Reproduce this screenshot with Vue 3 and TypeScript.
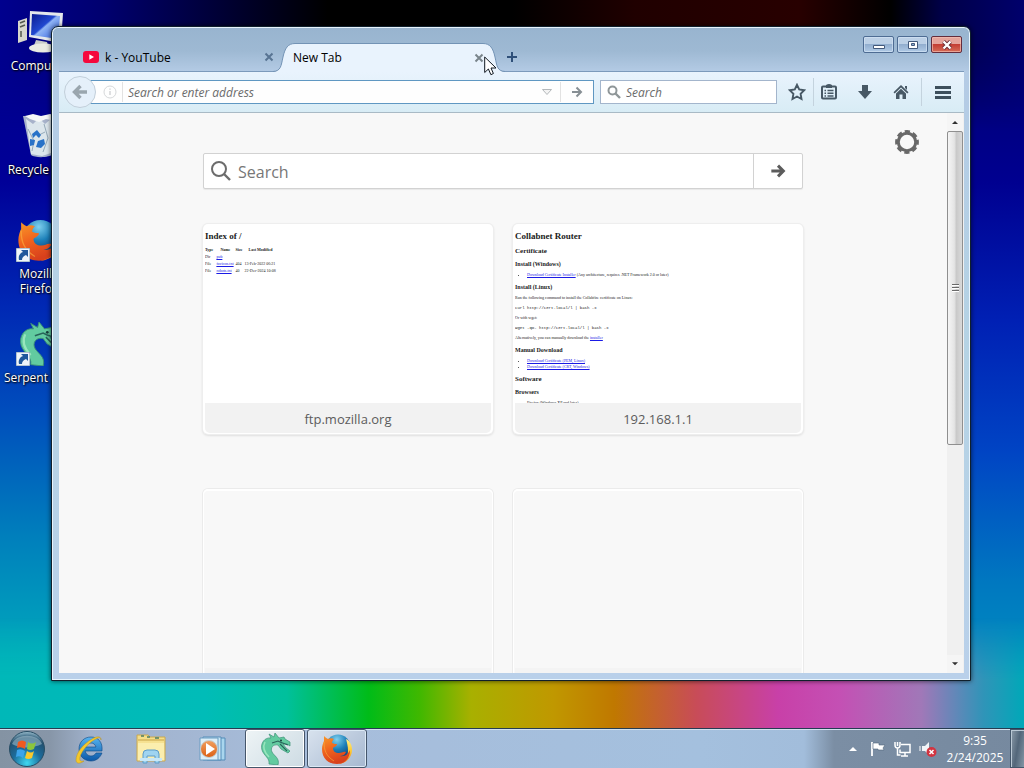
<script setup lang="ts">
import { ref } from 'vue'

interface Tile { title: string; kind: 'index' | 'router' | 'empty' }

const address = ref('')
const query = ref('')
const pageQuery = ref('')

const shortcuts = [
  { icon: 'pc', label: 'Computer', link: false },
  { icon: 'bin', label: 'Recycle Bin', link: false },
  { icon: 'firefox', label: 'Mozilla Firefox', link: true },
  { icon: 'serpent', label: 'Serpent I…', link: true },
]
const tiles: Tile[] = [
  { title: 'ftp.mozilla.org', kind: 'index' },
  { title: '192.168.1.1', kind: 'router' },
  { title: '', kind: 'empty' },
  { title: '', kind: 'empty' },
]
const pinned = [
  { icon: 'ie', label: 'Internet Explorer', state: '' },
  { icon: 'folder', label: 'Windows Explorer', state: '' },
  { icon: 'media', label: 'Media Player', state: '' },
  { icon: 'serpent', label: 'Serpent', state: 'active' },
  { icon: 'firefox', label: 'Firefox', state: 'open' },
]
</script>

<template>
  <svg class="defs" aria-hidden="true">
    <defs>
      <radialGradient id="globe" cx=".45" cy=".2" r=".8"><stop offset="0" stop-color="#7fd0ee" /><stop offset=".5" stop-color="#1c7fb8" /><stop offset="1" stop-color="#123a70" /></radialGradient>
      <linearGradient id="fur" x1="0" y1="0" x2=".4" y2="1"><stop offset="0" stop-color="#f89a2a" /><stop offset=".5" stop-color="#f0641e" /><stop offset="1" stop-color="#d8401c" /></linearGradient>
      <linearGradient id="tail" x1="0" y1="0" x2="0" y2="1"><stop offset="0" stop-color="#fff08a" /><stop offset=".5" stop-color="#fcc832" /><stop offset="1" stop-color="#f07820" /></linearGradient>
      <linearGradient id="screen" x1="0" y1="0" x2="1" y2="1"><stop offset="0" stop-color="#0a1a90" /><stop offset=".45" stop-color="#2148d0" /><stop offset=".5" stop-color="#8fb4f4" /><stop offset="1" stop-color="#2a58e0" /></linearGradient>
      <radialGradient id="orb" cx=".5" cy=".9" r=".9"><stop offset="0" stop-color="#3fd8f0" /><stop offset=".45" stop-color="#1c6c9c" /><stop offset=".8" stop-color="#23506e" /><stop offset="1" stop-color="#9cc0d0" /></radialGradient>
      <linearGradient id="manila" x1="0" y1="0" x2="0" y2="1"><stop offset="0" stop-color="#f4dc84" /><stop offset="1" stop-color="#fbf0b4" /></linearGradient>
      <linearGradient id="play" x1="0" y1="0" x2="0" y2="1"><stop offset="0" stop-color="#f0a060" /><stop offset="1" stop-color="#dc6014" /></linearGradient>
      <linearGradient id="ieblue" x1="0" y1="0" x2="0" y2="1"><stop offset="0" stop-color="#56b4f0" /><stop offset="1" stop-color="#0c58a8" /></linearGradient>
    </defs>
    <symbol id="firefox" viewBox="0 0 32 32">
      <circle cx="17" cy="14" r="12.5" fill="url(#globe)" />
      <path d="M25 6c4 2 6 6 6 11 0 8-7 14-14 14 6-2 10-7 10-13 0-5-1-8-2-12z" fill="url(#tail)" />
      <path d="M3 3c1 1 2 2 4 3 2-1 4-1 6 0-1 1-2 2-2 4 2 1 3 1 5 1 0 2-3 3-4 4 0 3 2 5 6 5 3 0 4-2 7-1-1 3-4 4-6 4 5 1 8-2 10-6 0 8-5 14-13 14C7 31 1 25 1 16c0-3 1-6 2-8z" fill="url(#fur)" />
      <path d="M3 9c0 8 2 14 10 19" fill="none" stroke="#fbb040" stroke-width="1" opacity=".6" />
    </symbol>
    <symbol id="serpent" viewBox="0 0 32 32">
      <path d="M10 31c1-6-5-8-7-14C1 10 6 4 12 5l-2-4 5 3 1-4 4 5 5-1 1 2 5 3 0 4-3-2-4 0 3 4 4 3-2 2-7-4-3-4c-5-1-8 3-6 7 2 4 8 6 6 13z" fill="#62cba0" stroke="#3d9277" stroke-width=".7" />
      <path d="M13 10l6-2 4 2m-2 1 7 7m-7-9 8 3" fill="none" stroke="#28645a" stroke-width="1.1" />
      <path d="M6 9c-3 6 0 11 4 15" fill="none" stroke="#98e6bd" stroke-width="1.5" />
      <circle cx="22" cy="7.5" r="1" fill="#173f3c" />
    </symbol>
    <symbol id="pc" viewBox="0 0 48 48">
      <path d="M3 13l9-3v22l-9 3z" fill="#d8d8cc" /><path d="M5 15l5-2m-5 6 5-2m-4 6v6" stroke="#54594e" stroke-width="1.5" />
      <path d="M21 32l11 2 2 6H18z" fill="#c8ccc8" /><ellipse cx="28" cy="40" rx="14" ry="4.5" fill="#e9ebe2" />
      <path d="M15 3l33 2-2 30-32-6z" fill="#e4e8ec" /><path d="M17 6l28 2-2 23-27-4z" fill="url(#screen)" />
    </symbol>
    <symbol id="bin" viewBox="0 0 48 48">
      <path d="M8 4l36 0-6 38c-4 4-18 4-22 1z" fill="#b9c5d0" opacity=".9" />
      <path d="M11 7l7 5 6-6 6 6 7-6 4 6-5 29-9 3-11-2z" fill="#dce6ec" />
      <path d="M10 4l8-2 8 2 9-2 10 3-4 4-10-2-7 3-9-3z" fill="#f6f8f8" />
      <path d="M13 17l6 12-2 10m12-27 4 14-5 14m-6-16 8-4" stroke="#94a9b8" fill="none" />
      <path d="M17 22l5-4 4 5-2 3-3-3-3 3zM15 27l5 1-1 5-4 1zM23 29l6-2 1 5-4 4-5-1z" fill="#2872c8" />
    </symbol>
    <symbol id="arrow-link" viewBox="0 0 14 14">
      <path d="M0 0h14v14H0z" fill="#eef4fa" stroke="#7790a8" /><path d="M5 2h7v7l-2-2c-3 1-4 3-4 5H3c-1-4 1-7 4-8z" fill="#20589c" />
    </symbol>
    <symbol id="ie" viewBox="0 0 32 32">
      <path d="M29 18H12c1 3 3 5 6 5 2 0 4-1 5-3h6c-2 5-6 8-11 8C11 28 6 23 6 16S11 4 18 4s12 5 11 14zm-17-4h11c-1-3-3-4-5-4s-5 1-6 4z" fill="url(#ieblue)" stroke="#0b4684" stroke-width=".6" />
      <path d="M28 7c0-4-4-4-9-1C10 11 3 20 3 27c0 4 4 4 8 1-3 1-5 0-4-4C9 17 17 8 25 5c2-1 3 0 3 2z" fill="#f4c82c" stroke="#bd9420" stroke-width=".5" />
    </symbol>
    <symbol id="folder" viewBox="0 0 32 32">
      <path d="M2 2h11l2 2h15v24H2z" fill="url(#manila)" stroke="#c9a850" /><path d="M3 7h26" stroke="#c7a346" /><path d="M6 3h3m3 1h3m5 1h4" stroke="#4e7f64" stroke-width="1.5" />
      <path d="M3 10h26v17H3z" fill="#fbeeae" /><path d="M8 30v-9q0-4 4-4h8q4 0 4 4v9h-4v-7h-8v7z" fill="#9fd4f0" stroke="#5c9cc8" /><path d="M5 25h22v3H5z" fill="#c8e7f6" />
    </symbol>
    <symbol id="media" viewBox="0 0 32 32">
      <path d="M10 5h18v22H10z" fill="#a9d6ee" stroke="#548cb8" /><path d="M6 4h18v23H6z" fill="#c9e6f5" stroke="#548cb8" /><path d="M3 5h18v22H3z" fill="#dbeef8" stroke="#6a9cc2" />
      <circle cx="12" cy="16" r="8.5" fill="url(#play)" stroke="#c5d0d4" /><path d="M9 10v12l9-6z" fill="#fff" />
    </symbol>
  </svg>

  <div class="screen">
    <main class="desktop">
      <ul class="shortcuts">
        <li v-for="s in shortcuts" :key="s.label">
          <span class="shortcut-icon">
            <svg class="art" :class="s.icon"><use :href="'#' + s.icon" /></svg>
            <svg v-if="s.link" class="link-badge"><use href="#arrow-link" /></svg>
          </span>
          <span class="shortcut-label">{{ s.label }}</span>
        </li>
      </ul>

      <section class="window" aria-label="Browser">
        <header class="titlebar">
          <div class="tabs" role="tablist">
            <div class="tab" role="tab" aria-selected="false">
              <svg class="yt" viewBox="0 0 16 12"><rect width="16" height="12" rx="3" fill="#f5083c" /><path d="M6.3 3.2v5.6L11 6z" fill="#fff" /></svg>
              <span class="tab-title">k - YouTube</span>
              <button class="close-tab" aria-label="Close tab"><svg viewBox="0 0 10 10"><path d="M1.5 1.5l7 7m0-7-7 7" stroke="#587493" stroke-width="2" /></svg></button>
            </div>
            <div class="tab selected" role="tab" aria-selected="true">
              <svg class="edge" viewBox="0 0 28 29"><path d="M0 29C8 28 8 23 10 14 12 5 15 .5 22 .5h6V29z" fill="#e9f3fd" /><path d="M0 28.500C8 28 8 23 10 14 12 5 15 .5 22 .5h6" fill="none" stroke="#7393b5" /></svg>
              <div class="tab-body">
                <span class="tab-title">New Tab</span>
                <button class="close-tab" aria-label="Close tab"><svg viewBox="0 0 10 10"><path d="M1.5 1.5l7 7m0-7-7 7" stroke="#7a858c" stroke-width="2" /></svg></button>
              </div>
              <svg class="edge" viewBox="0 0 28 29"><path d="M28 29C20 28 20 23 18 14 16 5 13 .5 6 .5H0V29z" fill="#e9f3fd" /><path d="M28 28.500C20 28 20 23 18 14 16 5 13 .5 6 .5H0" fill="none" stroke="#7393b5" /></svg>
            </div>
            <button class="new-tab" aria-label="New tab"><svg viewBox="0 0 12 12"><path d="M6 1v10M1 6h10" stroke="#2f5079" stroke-width="2" /></svg></button>
          </div>
          <div class="controls">
            <button aria-label="Minimize"><svg viewBox="0 0 14 12"><path d="M1.500 6.500h11v3h-11z" fill="#fff" stroke="#43597b" /></svg></button>
            <button aria-label="Maximize"><svg viewBox="0 0 14 12"><path d="M2.500 2.500h9v7h-9z" fill="#fff" stroke="#43597b" /><path d="M5.500 4.500h3v2h-3z" fill="#8daccf" stroke="#43597b" /></svg></button>
            <button class="close" aria-label="Close"><svg viewBox="0 0 14 12"><path d="M3.500 2.500l7 7m0-7-7 7" stroke="#672c35" stroke-width="4" /><path d="M3.500 2.500l7 7m0-7-7 7" stroke="#fff" stroke-width="2.400" /></svg></button>
          </div>
        </header>

        <div class="browser">
          <nav class="toolbar">
            <button class="back" aria-label="Back"><svg viewBox="0 0 16 16"><path d="M8.500 2 2.500 8l6 6M3 8h12" fill="none" stroke="#9aa6ae" stroke-width="3.400" /></svg></button>
            <form class="urlbar" @submit.prevent>
              <svg class="info" viewBox="0 0 14 14"><circle cx="7" cy="7" r="6" fill="none" stroke="#d6d8da" /><path d="M7 6v4M7 3.500v1.300" stroke="#d0d2d4" stroke-width="1.400" /></svg>
              <input v-model="address" type="text" aria-label="Address" placeholder="Search or enter address">
              <button type="button" class="drop" aria-label="History"><svg viewBox="0 0 12 8"><path d="M1.500 1.500h9L6 6.500z" fill="#f4f4f4" stroke="#b4b8bb" /></svg></button>
              <button class="go" aria-label="Go"><svg viewBox="0 0 12 12"><path d="M1 6h9M5.500 1.500 10 6l-4.500 4.500" fill="none" stroke="#878f94" stroke-width="2" /></svg></button>
            </form>
            <form class="searchbar" @submit.prevent>
              <svg viewBox="0 0 14 14"><circle cx="5.500" cy="5.500" r="4" fill="none" stroke="#8f9698" stroke-width="2" /><path d="M8.500 8.500l4.500 4.500" stroke="#8f9698" stroke-width="2.400" /></svg>
              <input v-model="query" type="text" aria-label="Web search" placeholder="Search">
            </form>
            <div class="tools">
              <button class="star" aria-label="Bookmark"><svg viewBox="0 0 18 18"><path d="M9 1.800l2.200 4.700 5 .7-3.600 3.600.9 5.200L9 13.500 4.500 16l.9-5.200L1.800 7.200l5-.7z" fill="none" stroke="#475865" stroke-width="1.900" /></svg></button>
              <button aria-label="Bookmarks list"><svg viewBox="0 0 18 18"><path d="M3 3.500h12q1 0 1 1v10q0 1-1 1H3q-1 0-1-1v-10q0-1 1-1z" fill="none" stroke="#475865" stroke-width="2" /><path d="M6 2q3-2 6 0v3H6z" fill="#475865" /><path d="M4.500 7.500h1.500m1.500 0h6m-9 2.800h1.500m1.500 0h6m-9 2.700h1.500m1.500 0h6" stroke="#475865" stroke-width="1.500" /></svg></button>
              <button aria-label="Downloads"><svg viewBox="0 0 18 18"><path d="M6 2h6v6h4l-7 8-7-8h4z" fill="#475865" /></svg></button>
              <button aria-label="Home"><svg viewBox="0 0 18 18"><path d="M9 2l7.500 7.300-1.200 1.200L9 4.500l-6.300 6L1.500 9.300zM13 3h2v4l-2-2zM4 10.500 9 5.800l5 4.700V16h-3.500v-4.500h-3V16H4z" fill="#475865" /></svg></button>
              <button class="menu" aria-label="Menu"><svg viewBox="0 0 18 18"><path d="M1 4.500h16M1 9.500h16M1 14.500h16" stroke="#3d4f5c" stroke-width="2.800" /></svg></button>
            </div>
          </nav>

          <div class="viewport">
            <div class="page">
              <button class="gear" aria-label="Customize"><svg viewBox="0 0 26 26"><circle cx="13" cy="13" r="8.700" fill="none" stroke="#686868" stroke-width="3" /><circle cx="13" cy="13" r="10.500" fill="none" stroke="#686868" stroke-width="2.800" stroke-dasharray="5.200 3.047" stroke-dashoffset="2.600" /></svg></button>
              <form class="page-search" @submit.prevent>
                <svg viewBox="0 0 22 22"><circle cx="9" cy="9" r="7" fill="none" stroke="#6c6c6c" stroke-width="2" /><path d="M14 14l6 6" stroke="#6c6c6c" stroke-width="2.400" /></svg>
                <input v-model="pageQuery" type="text" aria-label="Search the web" placeholder="Search">
                <button aria-label="Submit search"><svg viewBox="0 0 18 16"><path d="M1.500 8H15M9 2l6 6-6 6" fill="none" stroke="#5c5c5c" stroke-width="3.400" /></svg></button>
              </form>
              <div class="tiles">
                <article v-for="(t, i) in tiles" :key="i" class="tile" :class="t.kind">
                  <div class="thumb">
                    <template v-if="t.kind === 'index'">
                      <h1>Index of /</h1>
                      <table>
                        <thead><tr><th>Type</th><th class="name">Name</th><th>Size</th><th class="modified">Last Modified</th></tr></thead>
                        <tbody>
                          <tr><td>Dir</td><td><a href="#">pub</a></td><td></td><td></td></tr>
                          <tr><td>File</td><td><a href="#">favicon.txt</a></td><td>404</td><td>13-Feb-2022 06:21</td></tr>
                          <tr><td>File</td><td><a href="#">robots.txt</a></td><td>40</td><td>22-Dec-2024 10:08</td></tr>
                        </tbody>
                      </table>
                    </template>
                    <template v-else-if="t.kind === 'router'">
                      <h1>Collabnet Router</h1>
                      <h2>Certificate</h2>
                      <h3>Install (Windows)</h3>
                      <ul><li><a href="#">Download Certificate Installer</a> (Any architecture, requires .NET Framework 2.0 or later)</li></ul>
                      <h3>Install (Linux)</h3>
                      <p>Run the following command to install the Collabfire certificate on Linux:</p>
                      <pre>curl http://cert.local/l | bash -x</pre>
                      <p>Or with wget:</p>
                      <pre>wget -qO- http://cert.local/l | bash -x</pre>
                      <p>Alternatively, you can manually download the <a href="#">installer</a></p>
                      <h3>Manual Download</h3>
                      <ul>
                        <li><a href="#">Download Certificate (PEM, Linux)</a></li>
                        <li><a href="#">Download Certificate (CRT, Windows)</a></li>
                      </ul>
                      <h2>Software</h2>
                      <h3>Browsers</h3>
                      <ul><li>Firefox (Windows XP and later)</li></ul>
                    </template>
                  </div>
                  <div class="caption">{{ t.title }}</div>
                </article>
              </div>
            </div>
            <div class="scrollbar">
              <button aria-label="Scroll up"><svg viewBox="0 0 8 5"><path d="M0 5l4-4 4 4z" fill="#303030" /></svg></button>
              <div class="track"><div class="thumb-bar"><i></i><i></i><i></i></div></div>
              <button aria-label="Scroll down"><svg viewBox="0 0 8 5"><path d="M0 0l4 4 4-4z" fill="#303030" /></svg></button>
            </div>
          </div>
        </div>
      </section>
    </main>

    <footer class="taskbar">
      <button class="start" aria-label="Start">
        <svg viewBox="0 0 38 38">
          <circle cx="19" cy="19" r="17.500" fill="url(#orb)" stroke="#274d64" />
          <path d="M4 14C8 3 30 3 34 14 26 18 12 19 4 14z" fill="#d8edf6" opacity=".4" />
          <path d="M10 12q4-3 8 0l-1 7q-4-3-8-1z" fill="#ef5a20" /><path d="M20 12q4 3 8 0l-2 7q-4 2-7 0z" fill="#8cc63c" />
          <path d="M9 20q4-2 8 1l-2 7q-3-3-7-1z" fill="#3ca4ec" /><path d="M19 21q4 3 7 0l-2 7q-4 2-7 0z" fill="#fbc92c" />
        </svg>
      </button>
      <div class="apps">
        <button v-for="p in pinned" :key="p.label" :class="p.state" :aria-label="p.label"><svg><use :href="'#' + p.icon" /></svg></button>
      </div>
      <div class="tray">
        <button aria-label="Show hidden icons"><svg class="up" viewBox="0 0 8 5"><path d="M0 5l4-4 4 4z" fill="#fff" /></svg></button>
        <button aria-label="Action Center"><svg viewBox="0 0 18 18"><path d="M3 2v14" stroke="#fff" stroke-width="1.800" /><path d="M4 3h6v2h6l-2 3 1 2H9V9H4z" fill="#fff" stroke="#53677c" stroke-width=".6" /></svg></button>
        <button aria-label="Network"><svg viewBox="0 0 18 18"><path d="M7 4.500h9v8H6v-3M11 13v3M7 16h7M3.500 8v7h3M1 2v3q0 3 2.500 3T6 5V2M3.500 2v4" fill="none" stroke="#fff" stroke-width="1.500" /></svg></button>
        <button aria-label="Volume"><svg viewBox="0 0 18 18"><path d="M3 6h3l4-4v13l-4-4H3z" fill="#f0f4f8" /><path d="M1 6v5" stroke="#fff" /><circle cx="12.500" cy="12" r="5" fill="#d23440" /><path d="M10.500 10l4 4m0-4-4 4" stroke="#fff" stroke-width="1.500" /></svg></button>
      </div>
      <div class="clock"><time>9:35</time><time>2/24/2025</time></div>
      <button class="show-desktop" aria-label="Show desktop"></button>
    </footer>

    <svg class="cursor" viewBox="0 0 13 20" aria-hidden="true"><path d="M.7 1v15.500l3.700-3.500 2.500 5.700 2.500-1.200L7 12h5z" fill="#fff" stroke="#101820" /></svg>
  </div>
</template>

<style>
html, body { margin: 0; height: 100%; overflow: hidden; }
</style>

<style scoped>
* { box-sizing: border-box; }
button { border: 0; background: none; padding: 0; margin: 0; display: flex; align-items: center; justify-content: center; font: inherit; color: inherit; }
input { border: 0; background: none; outline: 0; padding: 0; min-width: 0; flex: 1; font: inherit; color: #222; }
ul { list-style: none; margin: 0; padding: 0; }
svg { display: block; flex: none; }
.defs { position: absolute; width: 0; height: 0; }

.screen { position: relative; height: 100vh; display: flex; flex-direction: column; overflow: hidden; font: 12px/15px "Open Sans", "Noto Sans", sans-serif; color: #000; }
.desktop {
  position: relative; flex: 1; min-height: 0; isolation: isolate;
  background:
    linear-gradient(180deg, #000068 0, #000090 25%, #0020b4 44%, #0044c4 62%, #0078c0 80%, #009cc0 100%) right / 54px 100% no-repeat,
    linear-gradient(180deg, #000088 0, #000098 25%, #0028b4 42%, #004cbc 56%, #0080bc 74%, #00a8bc 90%, #00b8b8 100%);
}
.desktop::before, .desktop::after { content: ""; position: absolute; left: 0; right: 0; z-index: -1; }
.desktop::before { top: 0; height: 130px; background: linear-gradient(90deg, #00008e 0, #000070 10%, #000028 24%, #000 32%, #000 50%, #200000 62%, #280000 78%, #000 87%, #000048 92%, #00006c 100%); mask-image: linear-gradient(#000 35%, transparent); }
.desktop::after { bottom: 0; height: 110px; background: linear-gradient(90deg, #00b8b8 0, #00bcb8 20%, #00c09c 28%, #00bc18 36%, #40b800 41%, #a8b000 46%, #c09800 54%, #c07800 60%, #c84c58 68%, #c840a8 76%, #c450b4 82%, #a078b8 90%, #3094b8 96%, #00a8b8 100%); mask-image: linear-gradient(transparent, #000 56%); }

.shortcuts { width: 78px; padding-top: 8px; display: grid; grid-auto-rows: 104px; color: #fff; text-align: center; text-shadow: 1px 1px 2px #000, 0 0 2px #000; }
.shortcuts li { display: flex; flex-direction: column; align-items: center; gap: 2px; }
.shortcut-icon { position: relative; width: 48px; height: 48px; display: flex; align-items: center; justify-content: center; }
.art { width: 44px; height: 44px; }
.art.pc, .art.bin { width: 48px; height: 48px; }
.link-badge { position: absolute; left: 1px; bottom: 2px; width: 14px; height: 14px; }
.shortcut-label { white-space: nowrap; }
.shortcuts li:nth-child(3) .shortcut-label { white-space: normal; width: 50px; }
.shortcuts li:last-child .shortcut-label { width: 70px; text-align: left; }

.window { position: absolute; inset: 26px 53px 47px 51px; display: flex; flex-direction: column; padding: 1px 6px 7px 7px; border: 1px solid #10202c; border-radius: 7px 7px 0 0; background: linear-gradient(180deg, #98b4cf 0, #9eb9d3 24px, #b4cbe5 45px, #b5d3e4 50%, #b9d0ea 100%); box-shadow: inset 0 0 0 1px #e8f4fc, 0 0 5px #000a; }
.titlebar { height: 43px; display: flex; justify-content: space-between; align-items: stretch; }
.tabs { display: flex; align-items: flex-end; flex: 1; min-width: 0; }
.tab { height: 28px; width: 222px; display: flex; align-items: center; padding: 0 6px 0 24px; }
.tab-title { flex: 1; white-space: nowrap; }
.yt { width: 16px; height: 12px; margin-right: 6px; }
.close-tab { width: 12px; height: 16px; }
.close-tab svg { width: 10px; height: 10px; }
.tab.selected { position: relative; z-index: 1; width: 232px; height: 29px; margin: 0 0 -1px -8px; padding: 0; }
.edge { width: 28px; height: 29px; }
.tab-body { flex: 1; height: 29px; margin: 0 -12px; padding: 0 4px; display: flex; align-items: center; position: relative; z-index: 1; }
.tab-body::before { content: ""; position: absolute; inset: 0 12px; z-index: -1; background: #e9f3fd; border-top: 1px solid #7393b5; }
.new-tab { width: 14px; height: 28px; }
.new-tab svg { width: 12px; height: 12px; }
.controls { display: flex; gap: 3px; padding: 8px 2px 0 0; }
.controls button { width: 31px; height: 17px; border: 1px solid #4e6c93; border-radius: 2px; background: linear-gradient(#bcd0e6 0 48%, #92aecf 50%, #b0cae6); box-shadow: inset 0 0 0 1px #d4e4f5aa; }
.controls svg { width: 14px; height: 12px; }
.controls .close { border-color: #642c3c; background: linear-gradient(#e5a49c 0 46%, #c43e34 50%, #d66d58); box-shadow: inset 0 0 0 1px #f4c0b4aa; }

.browser { flex: 1; min-height: 0; display: flex; flex-direction: column; border-top: 1px solid #7c9abb; }
.toolbar { height: 41px; flex: none; display: flex; align-items: center; padding: 0 1px 0 5px; background: linear-gradient(#e9f3fd, #d8ecf5); border-bottom: 1px solid #a9bac5; }
.back { position: relative; z-index: 1; width: 32px; height: 32px; border: 1px solid #c2cfda; border-radius: 50%; background: #e5f0fa; margin-right: -8px; }
.back svg { width: 16px; height: 16px; }
.urlbar { flex: 1; height: 24px; display: flex; align-items: center; background: #fefefe; border: 1px solid #5f97c2; padding-left: 14px; font-style: italic; }
.urlbar .info { width: 14px; height: 14px; margin-right: 5px; }
.urlbar input { border-left: 1px solid #e2e2e2; padding-left: 5px; height: 20px; }
.urlbar input::placeholder, .searchbar input::placeholder { color: #6b6b6b; opacity: 1; }
.drop { width: 26px; }
.drop svg { width: 12px; height: 8px; }
.go { width: 33px; height: 20px; border-left: 1px solid #e2e2e2; }
.go svg { width: 12px; height: 12px; }
.searchbar { width: 177px; height: 24px; margin-left: 6px; display: flex; align-items: center; gap: 5px; padding-left: 6px; background: #fff; border: 1px solid #a3b5cc; font-style: italic; }
.searchbar svg { width: 14px; height: 14px; }
.tools { display: flex; align-items: center; padding-left: 3px; }
.tools button { width: 36px; height: 28px; }
.tools svg { width: 18px; height: 18px; }
.tools .star { width: 34px; border-right: 1px solid #c4d3de; margin-right: -3px; }
.tools .menu { width: 42px; margin-left: 2px; border-left: 1px solid #c4d3de; }

.viewport { flex: 1; min-height: 0; display: flex; background: #f8f8f8; }
.page { flex: 1; position: relative; overflow: hidden; padding-top: 40px; display: flex; flex-direction: column; align-items: center; }
.gear { position: absolute; top: 16px; right: 27px; width: 26px; height: 26px; }
.gear svg { width: 26px; height: 26px; }
.page-search { flex: none; width: 600px; height: 36px; display: flex; align-items: center; background: #fff; border: 1px solid #d2d2d2; border-radius: 2px; padding-left: 6px; font-size: 16px; box-shadow: 0 1px 1px #0001; }
.page-search > svg { width: 22px; height: 22px; margin-right: 6px; }
.page-search input { height: 34px; padding-top: 2px; }
.page-search input::placeholder { color: #777; opacity: 1; }
.page-search button { width: 49px; height: 34px; border-left: 1px solid #d2d2d2; }
.page-search button svg { width: 16px; height: 16px; }
.tiles { flex: none; display: grid; grid-template-columns: 290px 290px; gap: 55px 20px; padding-top: 35px; }
.tile { height: 210px; border-radius: 5px; background: #fff; overflow: hidden; display: flex; flex-direction: column; box-shadow: 0 0 0 1px #eee, 0 1px 3px #0003; padding: 0 2px 1px; }
.tile.empty { background: #f8f8f8; box-shadow: inset 0 1px 0 1px #fff, 0 0 0 1px #ebebeb, 0 1px 2px #0001; }
.caption { flex: 1; background: #f2f2f2; display: flex; align-items: center; justify-content: center; padding-top: 2px; font-size: 13px; line-height: 18px; color: #5c5c5c; border-radius: 0 0 5px 5px; }
.empty .caption { background: #f4f4f4; }

/* Miniature page previews */
.thumb { height: 179px; flex: none; overflow: hidden; padding: 7px 0 0; font: 4px/6px "Liberation Serif", serif; color: #222; white-space: nowrap; }
.thumb a { color: #1a1ae6; }
.thumb h1 { font-size: 9px; line-height: 10px; margin: 0; }
.thumb h2 { font-size: 7px; line-height: 8px; margin: 5px 0; }
.thumb h1 + h2 { margin-top: 6px; }
.thumb h3 { font-size: 6px; line-height: 8px; margin: 5px 0 4px; }
.thumb ul { padding-left: 12px; list-style: disc; }
.thumb p, .thumb pre { margin: 4px 0; }
.thumb pre { font: 4px/6px "Liberation Mono", monospace; }
.thumb table { margin-top: 5px; border-spacing: 0; font: 4px/7px "Liberation Serif", serif; }
.thumb th, .thumb td { padding: 0 2px 0 0; text-align: left; }
.thumb th:first-child { padding-right: 3px; }
.thumb .name, .thumb .modified { padding-left: 4px; }

.scrollbar { width: 17px; flex: none; display: flex; flex-direction: column; background: #f0f0f0; padding-right: 1px; }
.scrollbar button { height: 18px; background: #f5f5f5; }
.scrollbar svg { width: 6px; height: 4px; }
.track { flex: 1; }
.thumb-bar { height: 60%; border: 1px solid #8f8f8f; border-radius: 2px; background: linear-gradient(90deg, #f5f5f5, #e4e4e4 45%, #c9c9c9 60%, #d9d9d9); display: flex; flex-direction: column; align-items: center; justify-content: center; gap: 1px; }
.thumb-bar i { width: 7px; height: 2px; background: #6a6a6a; border-bottom: 1px solid #fff; }

.taskbar { height: 40px; flex: none; display: flex; align-items: stretch; padding-left: 8px; border-top: 1px solid #263c52; box-shadow: inset 0 1px #d3e1ee; background: linear-gradient(90deg, #8493a3 0, #8796a8 50px, #a0b1cb 90px, #a7bddb 300px, #a4c0de 700px, #a2bddb calc(100% - 220px), #7b8ea4 calc(100% - 190px), #76899f 100%); }
.start { width: 38px; }
.start svg { width: 38px; height: 38px; }
.apps { display: flex; gap: 2px; padding-left: 13px; flex: 1; }
.apps button { width: 60px; border: 1px solid transparent; border-radius: 3px; }
.apps svg { width: 32px; height: 32px; }
.apps .active { border-color: #45566b; background: linear-gradient(135deg, #eef4f6, #cddbe3); box-shadow: inset 0 0 0 1px #fff; }
.apps .open { border-color: #45566b; background: linear-gradient(135deg, #d8e2ee, #a6b8d0); box-shadow: inset 0 0 0 1px #dce9f5; }
.tray { display: flex; align-items: center; }
.tray button { width: 25px; height: 24px; }
.tray svg { width: 18px; height: 18px; }
.tray .up { width: 8px; height: 5px; }
.clock { width: 70px; display: flex; flex-direction: column; align-items: center; justify-content: center; line-height: 17px; color: #fff; }
.show-desktop { width: 14px; border: 1px solid #44576b; border-right: 0; background: linear-gradient(100deg, #8c9caa, #53677a 50%, #8396a5); box-shadow: inset 1px 1px #b9c8d4; }
.cursor { position: absolute; left: 484px; top: 56px; width: 13px; height: 20px; z-index: 5; }
</style>
